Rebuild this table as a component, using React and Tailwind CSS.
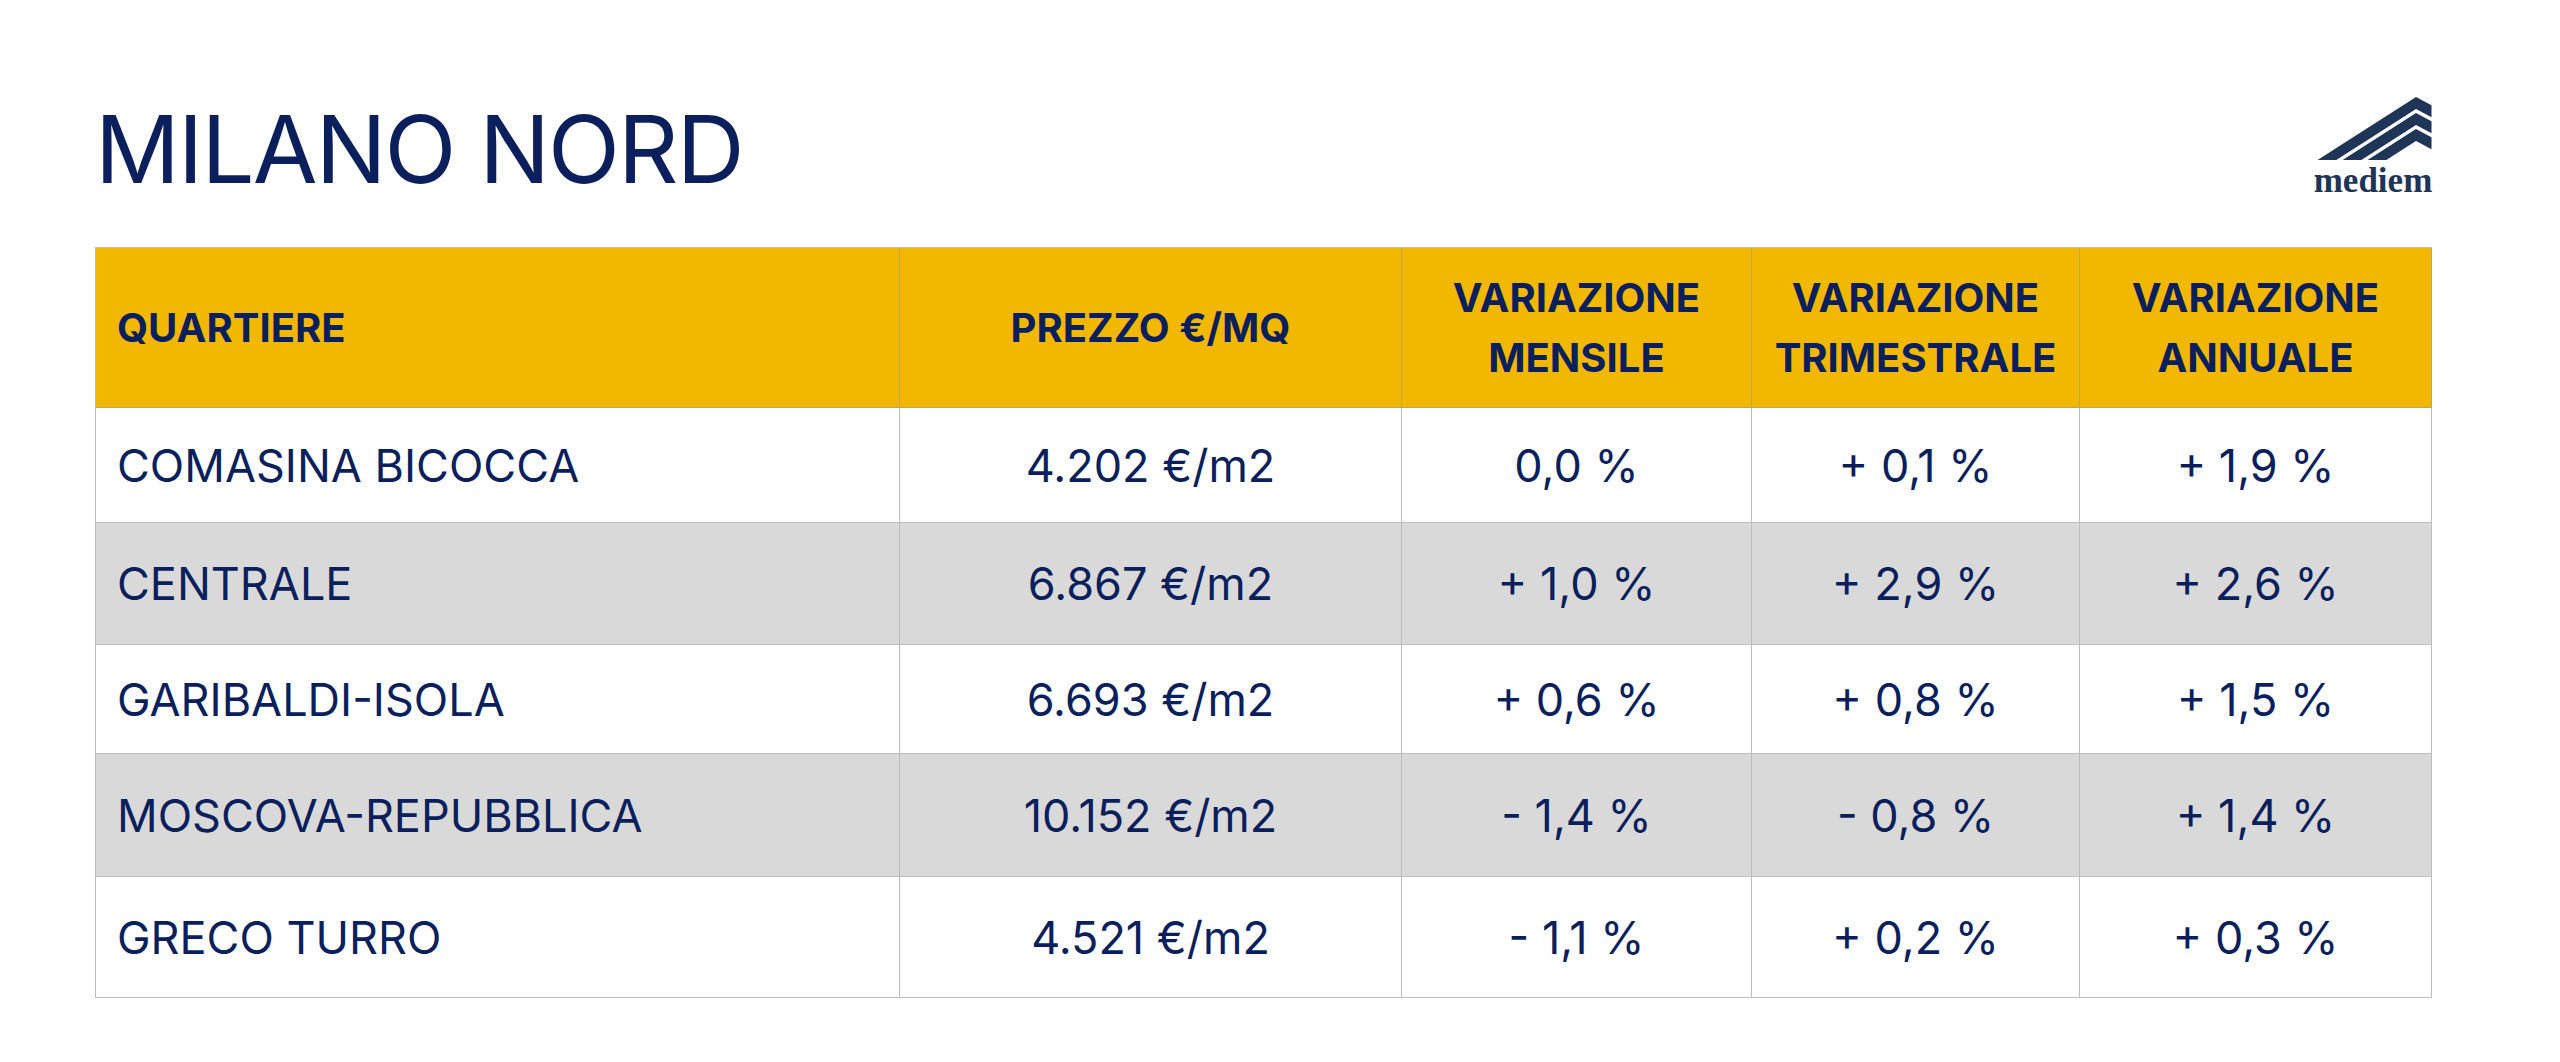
import React from "react";

const rows = [
  { name: "COMASINA BICOCCA", price: "4.202 €/m2", m: "0,0 %", t: "+ 0,1 %", a: "+ 1,9 %", h: "h-[115px]", bg: "bg-white" },
  { name: "CENTRALE", price: "6.867 €/m2", m: "+ 1,0 %", t: "+ 2,9 %", a: "+ 2,6 %", h: "h-[122px]", bg: "bg-[#d9d9d9]" },
  { name: "GARIBALDI-ISOLA", price: "6.693 €/m2", m: "+ 0,6 %", t: "+ 0,8 %", a: "+ 1,5 %", h: "h-[109px]", bg: "bg-white" },
  { name: "MOSCOVA-REPUBBLICA", price: "10.152 €/m2", m: "- 1,4 %", t: "- 0,8 %", a: "+ 1,4 %", h: "h-[123px]", bg: "bg-[#d9d9d9]" },
  { name: "GRECO TURRO", price: "4.521 €/m2", m: "- 1,1 %", t: "+ 0,2 %", a: "+ 0,3 %", h: "h-[121px]", bg: "bg-white" },
];

const cols = "grid grid-cols-[804px_502px_350px_328px_352px]";

function Logo() {
  // three stacked roof stripes, cut square on the right and at the bottom
  return (
    <div className="flex flex-col items-center w-[118px]">
      <svg width="118" height="67" viewBox="13 9 118 67" fill="#1f3557">
        <polygon points="16.6,75 115,12 130.5,20.3 130.5,32.3 115,24 35.3,75" />
        <polygon points="41.6,75 115,28 130.5,36.3 130.5,48.3 115,40 60.3,75" />
        <polygon points="66.6,75 115,44 130.5,52.3 130.5,64.3 115,56 85.3,75" />
      </svg>
      <span className="mt-[2px] text-[35px] leading-none font-bold text-[#1f3557] font-['Liberation_Serif',serif]">
        mediem
      </span>
    </div>
  );
}

function HeadCell({ children, left }) {
  return (
    <div
      className={`flex items-center border-r border-b border-[#c6a842] text-[40px] leading-[60px] font-bold ${
        left ? "justify-start pl-[21px] text-left" : "justify-center text-center"
      }`}
    >
      <span>{children}</span>
    </div>
  );
}

function Cell({ children, left }) {
  return (
    <div
      className={`flex items-center border-r border-b border-[#bdbdbd] text-[45px] leading-none ${
        left ? "justify-start pl-[21px]" : "justify-center"
      }`}
    >
      {children}
    </div>
  );
}

export default function App() {
  return (
    <div className="w-[2560px] h-[1062px] bg-white pl-[95px] pr-[128px] pt-[94px] text-[#0a1f5c] font-['Inter','Noto_Sans',sans-serif]">
      <div className="flex justify-between items-start h-[153px]">
        <h1 className="mt-[8px] text-[94px] leading-none font-normal tracking-[-0.02em]">MILANO NORD</h1>
        <Logo />
      </div>

      <div className="w-[2337px] border-l border-t border-[#bdbdbd]">
        <div className={`${cols} h-[160px] bg-[#f2b800]`}>
          <HeadCell left>QUARTIERE</HeadCell>
          <HeadCell>PREZZO €/MQ</HeadCell>
          <HeadCell>
            VARIAZIONE
            <br />
            MENSILE
          </HeadCell>
          <HeadCell>
            VARIAZIONE
            <br />
            TRIMESTRALE
          </HeadCell>
          <HeadCell>
            VARIAZIONE
            <br />
            ANNUALE
          </HeadCell>
        </div>
        {rows.map((r) => (
          <div key={r.name} className={`${cols} ${r.h} ${r.bg}`}>
            <Cell left>{r.name}</Cell>
            <Cell>{r.price}</Cell>
            <Cell>{r.m}</Cell>
            <Cell>{r.t}</Cell>
            <Cell>{r.a}</Cell>
          </div>
        ))}
      </div>
    </div>
  );
}
